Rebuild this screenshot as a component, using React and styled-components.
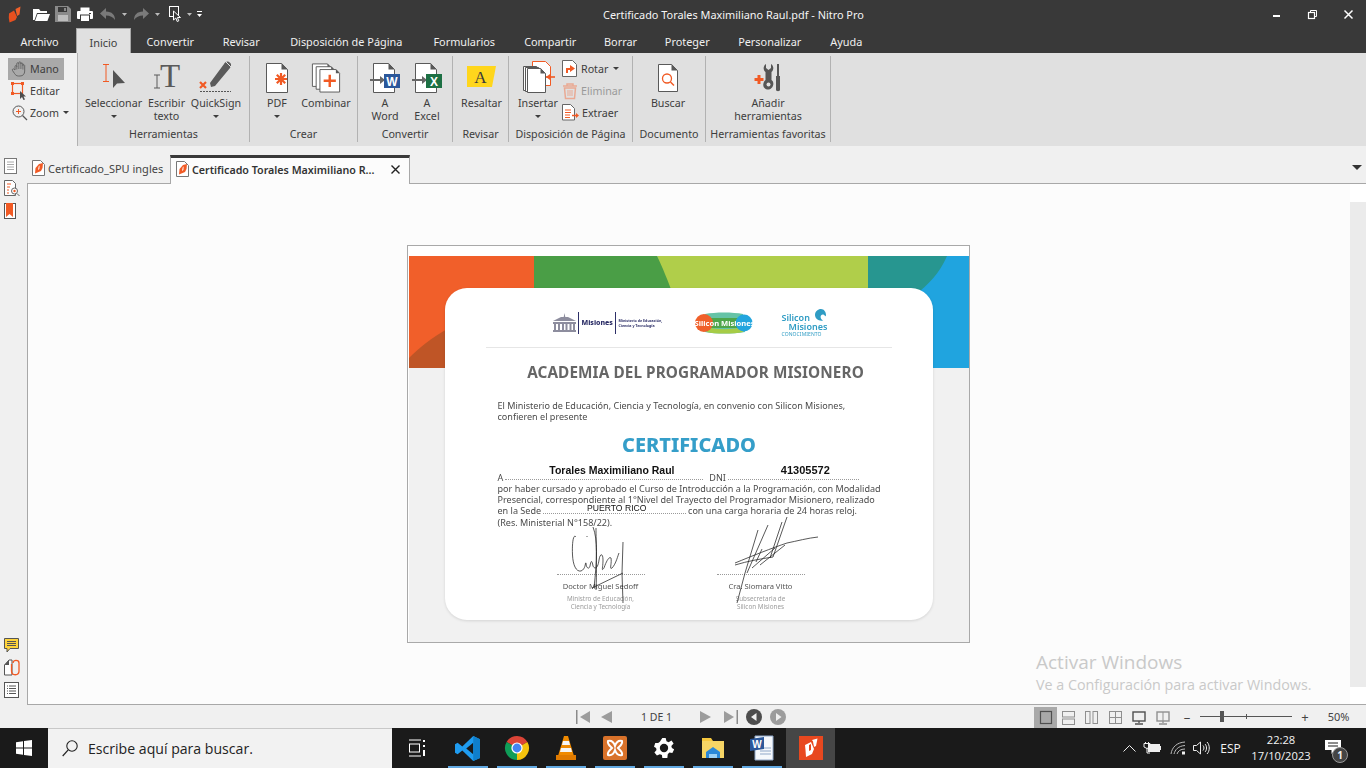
import React from "react";
import styled, { createGlobalStyle } from "styled-components";

const Global = createGlobalStyle`
  html, body { margin: 0; padding: 0; overflow: hidden; background: #f0f0f0; }
  * { box-sizing: border-box; }
  #root { width: 1366px; height: 768px; }
`;

const UI = `"Noto Sans", "Open Sans", sans-serif`;
const DOCFONT = `"Noto Sans", "Open Sans", sans-serif`;
const OR = "#f15a24";
const GR = "#595959";

const Shell = styled.div`
  width: 1366px; height: 768px; display: flex; flex-direction: column;
  font-family: ${UI}; font-size: 10.7px; color: #3d3d3d; overflow: hidden; background: #f0f0f0;
`;

/* ---------- title bar ---------- */
const TitleBar = styled.div`
  height: 28px; background: #393939; color: #fff; display: grid;
  grid-template-columns: 603px 1fr auto; align-items: center;
`;
const Quick = styled.div`display: flex; align-items: center; padding-left: 8px; height: 28px;`;
const QuickSlot = styled.span`display: flex; margin-left: ${p => p.$ml || 0}px;`;
const WinTitle = styled.div`font-size: 10.9px; white-space: nowrap; color: #f5f5f5;`;
const WinBtns = styled.div`display: flex; align-items: center; height: 28px;`;
const WinBtn = styled.span`width: 36px; display: flex; justify-content: center; align-items: center; padding-top: ${p => p.$pt || 0}px;`;

/* ---------- menu ---------- */
const Menu = styled.div`height: 25px; background: #393939; display: flex; align-items: flex-end; padding-left: 3px; font-size: 10.9px;`;
const MenuTab = styled.div`
  height: 25px; padding: 2px 0 0; display: flex; align-items: center; justify-content: center; flex: none; white-space: nowrap;
  width: ${p => p.$w}px;
  color: ${p => (p.$active ? "#3d3d3d" : "#f0f0f0")};
  background: ${p => (p.$active ? "#e0e0e0" : "transparent")};
  ${p => p.$active && "border: 1px solid #a8a8a8; border-bottom: 0; margin-right: 1px;"}
`;

/* ---------- ribbon ---------- */
const Ribbon = styled.div`height: 93px; display: flex; background: #e0e0e0;`;
const HandCol = styled.div`width: 77px; background: #f0f0f0; padding: 5px 0 0 8px; flex: none;`;
const HandRow = styled.div`
  width: 56px; height: 22px; display: flex; align-items: center; gap: 1px; padding: 0 0 1px 3px;
  background: ${p => (p.$on ? "#a9a9a9" : "transparent")};
`;
const Groups = styled.div`display: flex; padding: 3px 0 4px; height: 93px; border-left: 1px solid #b2b2b2;`;
const Group = styled.div`
  width: ${p => p.$w}px; height: 86px; display: flex; flex-direction: column;
  border-right: 1px solid #b2b2b2; flex: none;
`;
const GroupBody = styled.div`height: 71px; padding-top: 2px; padding-left: ${p => p.$pl || 0}px; display: flex;`;
const GroupLabel = styled.div`height: 15px; line-height: 14px; text-align: center; white-space: nowrap;`;
const BigBtn = styled.div`width: ${p => p.$w}px; display: flex; flex-direction: column; align-items: center; flex: none; margin-right: ${p => p.$mr || 0}px;`;
const IconSlot = styled.div`height: 39px; padding-bottom: 1px; width: 100%; display: flex; align-items: center; justify-content: center;`;
const BtnLabel = styled.div`line-height: 13px; text-align: center; white-space: nowrap;`;
const Caret = styled.span`
  display: inline-block; width: 0; height: 0; border-left: 3px solid transparent; border-right: 3px solid transparent;
  border-top: 3px solid #3d3d3d; margin: ${p => p.$m || "5px 0 0"};
`;
const SmallList = styled.div`display: flex; flex-direction: column;`;
const SmallRow = styled.div`
  height: 22px; display: flex; align-items: center; gap: 3px; padding-bottom: 1px;
  color: ${p => (p.$off ? "#9a9a9a" : "#3d3d3d")};
`;

/* ---------- workspace ---------- */
const Work = styled.div`flex: 1; min-height: 0; display: flex;`;
const Side = styled.div`width: 27px; flex: none; display: flex; flex-direction: column; justify-content: space-between; padding: 12px 0 7px 4px;`;
const SideSet = styled.div`display: flex; flex-direction: column; gap: ${p => p.$gap}px;`;
const WorkRight = styled.div`flex: 1; min-width: 0; display: flex; flex-direction: column;`;
const Tabs = styled.div`height: 37px; display: flex; align-items: flex-end; position: relative; flex: none; z-index: 2; font-size: 11px;`;
const DocTab = styled.div`
  height: ${p => (p.$active ? "29px" : "28px")};
  width: ${p => p.$w}px; display: flex; align-items: center; padding-left: 5px; gap: 2px; white-space: nowrap;
  ${p => p.$active
    ? "background:#fcfcfc;border-top:3px solid #393939;border-left:1px solid #a8a8a8;border-right:1px solid #a8a8a8;font-weight:600;font-size:10.7px;color:#333;margin-bottom:-1px;padding-bottom:3px;"
    : "color:#444;padding-bottom:2px;"}
`;
const TabTitle = styled.span`flex: 1;`;
const TabClose = styled.span`display: flex; margin-right: 9px;`;
const TabMenu = styled.span`
  position: absolute; right: 4px; top: 19px; width: 0; height: 0;
  border-left: 5px solid transparent; border-right: 5px solid transparent; border-top: 5px solid #333;
`;
const DocArea = styled.div`
  flex: 1; min-height: 0; display: flex; background: #fcfcfc;
  border-top: 1px solid #a8a8a8; border-left: 1px solid #a8a8a8; border-bottom: 1px solid #a8a8a8; position: relative;
`;
const Canvas = styled.div`flex: 1; display: flex; align-items: center; justify-content: center; padding-right: 2px;`;
const Scroll = styled.div`width: 16px; background: #fff; padding: 18px 0 17px; flex: none;`;
const ScrollThumb = styled.div`height: 100%; background: #ebebeb;`;
const Watermark = styled.div`position: absolute; left: 1008px; top: 465px; color: #c9c9c9; pointer-events: none; white-space: nowrap; font-family: "Open Sans", sans-serif;`;
const WaterBig = styled.div`font-size: 19px; line-height: 26px;`;
const WaterSmall = styled.div`font-size: 14.3px; line-height: 20px;`;

/* ---------- the certificate page ---------- */
const Page = styled.div`
  width: 563px; height: 398px; border: 1px solid #a9a9a9; background: #fff; position: relative; flex: none;
`;
const PageTop = styled.div`padding: 10px 0 0 1px; height: 122px;`;
const PageRest = styled.div`height: 274px; background: #f1f1f1; margin-left: 1px;`;
const Card = styled.div`
  position: absolute; left: 37px; top: 42px; width: 488px; height: 332px; background: #fff; border-radius: 22px;
  box-shadow: 0 1px 3px rgba(0,0,0,.12); font-family: ${DOCFONT}; color: #4a4a4a; filter: blur(.25px);
  display: flex; flex-direction: column;
`;
const Logos = styled.div`height: 60px; margin: 0 41px; border-bottom: 1px solid #e6e6e6; display: flex; align-items: center; padding: 10px 0 0 67px;`;
const MisName = styled.span`font-size: 7px; font-weight: 800; color: #2d2f68; padding: 0 3px; border-left: 1px solid #2d2f68; border-right: 1px solid #2d2f68; margin-left: 2px; height: 22px; display: flex; align-items: center; width: 38px;`;
const MisMinistry = styled.span`font-size: 3.6px; line-height: 5px; font-weight: 700; color: #2d2f68; padding-left: 3px; width: 62px;`;
const SiliconBadge = styled.div`position: relative; width: 58px; height: 22px; margin-left: 17px; flex: none;`;
const SiliconBadgeText = styled.span`position: absolute; left: 0; top: 6px; width: 58px; text-align: center; color: #fff; font-size: 7.6px; line-height: 10px; font-weight: 700; white-space: nowrap;`;
const SiliconK = styled.div`margin-left: 29px; width: 46px; color: #2f9cc4; font-weight: 600; position: relative; flex: none; padding-top: 5px;`;
const SiliconKLine = styled.div`font-size: 9px; line-height: 9px; white-space: pre;`;
const SiliconKSub = styled.div`font-size: 5px; line-height: 6px; font-weight: 400; letter-spacing: .1px; white-space: nowrap;`;
const Swirl = styled.svg`position: absolute; right: 2px; top: 1px;`;
const CardTitle = styled.h1`margin: 14px 0 0; font-size: 15.3px; line-height: 20px; font-weight: 700; color: #666; text-align: center; padding-left: 14px; letter-spacing: .1px;`;
const Body = styled.div`padding-left: 53px; width: 460px; font-size: 9.05px; line-height: 11.3px; color: #4a4a4a;`;
const Intro = styled.p`margin: 18px 0 0;`;
const Cert = styled.div`margin: 10px 0 0 -3px; height: 24px; font-size: 20px; line-height: 24px; font-weight: 800; color: #359ec9; text-align: center; padding-right: 71px; width: 460px;`;
const FormLine = styled.div`display: flex; align-items: flex-end; margin-top: 15px; height: 11.3px; gap: 2px; white-space: nowrap;`;
const FormLineB = styled(FormLine)`margin-top: 0;`;
const Leader = styled.span`
  width: ${p => p.$w}px; height: 8px; border-bottom: 1px dotted #9a9a9a; position: relative; flex: none; margin: 0 ${p => p.$mr || 0}px 2.5px 0;
`;
const Filled = styled.span`
  position: absolute; left: ${p => p.$l}px; bottom: ${p => p.$b}px; color: #111; white-space: nowrap;
  font-family: "Liberation Sans", sans-serif; font-weight: ${p => (p.$bold ? 700 : 400)}; font-size: ${p => p.$s}px;
`;
const Signs = styled.div`display: flex; padding-left: 112px; position: relative; margin-top: 46px;`;
const Sign = styled.div`width: 88px; margin-right: ${p => p.$mr || 0}px; border-top: 1px dotted #9a9a9a; text-align: center; padding-top: 6px; flex: none;`;
const SignName = styled.div`font-size: 7.6px; line-height: 11px; color: #555; white-space: nowrap;`;
const SignRole = styled.div`font-size: 6.3px; line-height: 8px; color: #9c9c9c; white-space: nowrap; margin-top: 3px;`;
const SigInk = styled.svg`position: absolute; left: 95px; top: -62px;`;

/* ---------- status bar ---------- */
const Status = styled.div`height: 23px; flex: none; display: grid; grid-template-columns: 1034px 1fr; background: #f0f0f0;`;
const Pager = styled.div`display: flex; align-items: center; padding-left: 576px;`;
const PagerGap = styled.span`width: ${p => p.$w}px; flex: none;`;
const PageNum = styled.span`width: 86px; padding-left: 28px; font-size: 10.5px; color: #444; flex: none;`;
const ViewSet = styled.div`display: flex; align-items: center;`;
const ViewBtn = styled.span`
  width: ${p => p.$w || 24}px; height: 21px; margin-top: 2px; display: flex; align-items: center; justify-content: center; flex: none;
  background: ${p => (p.$on ? "#a9a9a9" : "transparent")};
`;
const ZoomBit = styled.span`color: #444; font-size: ${p => p.$s || 13}px; width: ${p => p.$w}px; text-align: center; flex: none; line-height: 16px;`;
const Slider = styled.div`width: 92px; height: 1px; background: #555; position: relative; margin: 0 7px 0 1px; flex: none;`;
const Thumb = styled.span`position: absolute; left: 20px; top: -5px; width: 4px; height: 11px; background: #555;`;
const Tick = styled.span`position: absolute; left: 46px; top: -2px; width: 1px; height: 5px; background: #555;`;

/* ---------- task bar ---------- */
const Task = styled.div`height: 40px; flex: none; background: #1a1a1a; display: flex; color: #fff;`;
const Start = styled.div`width: 48px; display: flex; align-items: center; justify-content: center; flex: none;`;
const SearchBox = styled.div`
  width: 344px; background: #f2f2f2; color: #222; display: flex; align-items: center; padding-left: 14px; gap: 10px;
  font-family: "Open Sans", sans-serif; font-size: 14.1px; flex: none; border-top: 1px solid #c8c8c8;
`;
const TaskView = styled.div`width: 51px; display: flex; align-items: center; justify-content: center; flex: none; padding-right: 2px;`;
const Pin = styled.div`
  width: 49px; height: 40px; display: flex; align-items: center; justify-content: center; position: relative; flex: none;
  background: ${p => (p.$on ? "#464646" : "transparent")};
  &::after { content: ""; position: absolute; left: ${p => (p.$on ? 0 : 5)}px; right: ${p => (p.$on ? 0 : 4)}px; bottom: 0; height: 2px; background: ${p => (p.$on ? "#464646" : "#62a9e2")}; }
`;
const Tray = styled.div`flex: 1; display: flex; align-items: center; padding-left: 288px; font-family: "Open Sans", sans-serif; font-size: 12px; color: #f3f3f3;`;
const TraySlot = styled.span`display: flex; width: ${p => p.$w}px; justify-content: center; flex: none;`;
const Clock = styled.div`width: 68px; text-align: center; line-height: 16px; flex: none; white-space: nowrap; font-size: 11.2px;`;
const Notify = styled.div`margin-left: 10px; position: relative; width: 24px; height: 24px; flex: none; padding-top: 4px;`;
const NotifyNum = styled.span`position: absolute; right: 1px; bottom: -3px; width: 16px; height: 16px; border-radius: 50%; background: #444; border: 1px solid #999; font-size: 10px; line-height: 14px; text-align: center; font-weight: 700;`;

/* ---------- icons ---------- */
const Sv = ({ w, h, children, vb }) => <svg width={w} height={h} viewBox={vb || `0 0 ${w} ${h}`} style={{ display: "block", flex: "none", overflow: "visible" }}>{children}</svg>;

const docPath = (x, y, w, h, f = 6) => `M${x} ${y}H${x + w - f}L${x + w} ${y + f}V${y + h}H${x}Z`;
const Doc = ({ x, y, w, h, f = 6, s = GR }) => (
  <g>
    <path d={docPath(x + .5, y + .5, w, h, f)} fill="#fff" stroke={s} />
    <path d={`M${x + w - f + .5} ${y}L${x + w + .5} ${y + f + .5}H${x + w - f + .5}Z`} fill={s} />
  </g>
);
const LogoIcon = () => (
  <Sv w={14} h={17} vb="0 0 14 17">
    <path d="M7.5 3L12.5.5L11.5 8.5L9 10Z" fill="#f0602a" />
    <path d="M1 7.5L6 4.5L9 11L7.5 14L1.5 16.5L.8 12Z" fill="#e8501f" />
  </Sv>
);
const FileTab = () => (
  <Sv w={14} h={17}>
    <path d={docPath(.5, .5, 12, 15, 4)} fill="#fff" stroke="#777" />
    <path d="M7 4L11 3L10.5 8L9 11L3 13.5L3.5 8Z" fill={OR} />
    <path d="M6.8 6L7.6 5.5L7.4 9L6 10Z" fill="#fff" />
  </Sv>
);
const OpenIcon = () => (
  <Sv w={17} h={14}><path d="M0 2h6l1.5 2H14v2H4L1.5 13H0ZM4.5 7H17l-2.6 7H2Z" fill="#fff" /></Sv>
);
const SaveIcon = () => (
  <Sv w={16} h={16}><path d="M0 0H13L16 3V16H0Z" fill="#8a8a8a" /><rect x="3" y="1" width="9" height="5" fill="#393939" /><rect x="3" y="9" width="10" height="6" fill="#bdbdbd" /><rect x="9" y="2" width="2" height="3" fill="#8a8a8a" /></Sv>
);
const PrintIcon = () => (
  <Sv w={16} h={15}><rect x="3.5" y=".5" width="9" height="5" fill="#fff" /><rect x="0" y="4" width="16" height="8" rx="1" fill="#fff" /><rect x="3.5" y="8" width="9" height="6.5" fill="#fff" stroke="#393939" /><rect x="12" y="6" width="2" height="1" fill="#393939" /></Sv>
);
const UndoIcon = ({ flip }) => (
  <Sv w={16} h={12}><path d={flip ? "M10 0L16 5.5L10 11V7.5C6 7.5 3 9 1 12C1 7 4 3.5 10 3.5Z" : "M6 0L0 5.5L6 11V7.5C10 7.5 13 9 15 12C15 7 12 3.5 6 3.5Z"} fill="#7a7a7a" /></Sv>
);
const SelectQuick = () => (
  <Sv w={13} h={16}><rect x=".5" y=".5" width="9" height="10" fill="none" stroke="#fff" /><path d="M4.5 5V14L6.8 12L8.2 15.5L9.8 14.8L8.4 11.5H11.5Z" fill="#393939" stroke="#fff" /></Sv>
);
const MoreIcon = () => (
  <Sv w={6} h={6}><rect y="0" width="5" height="1" fill="#fff" /><path d="M0 3H5L2.5 6Z" fill="#fff" /></Sv>
);
const QCaret = () => <Sv w={5} h={3}><path d="M0 0H5L2.5 3Z" fill="#bbb" /></Sv>;

const HandIcon = () => (
  <Sv w={18} h={18}>
    <path d="M4 10V6.5C4 5.2 5.7 5.2 5.8 6.5V3.7C5.8 2.4 7.7 2.4 7.8 3.7V2.8C7.8 1.5 9.8 1.5 9.9 2.8V3.8C10 2.7 11.8 2.7 11.9 3.9V5.5C12 4.4 13.7 4.5 13.7 5.8V11C13.7 14 12 16 9 16H7.5C5.5 16 4.5 15 3.5 13.5L1.5 10.5C.8 9.3 2.3 8.3 3.2 9.3Z" fill="#a9a9a9" stroke="#5e5e5e" strokeWidth=".9" />
    <path d="M5.8 6V9.5M7.8 3.7V9M9.9 3V9M11.9 4V9.5" stroke="#5e5e5e" strokeWidth=".8" />
  </Sv>
);
const EditIcon = () => (
  <Sv w={18} h={18}>
    <rect x="1.5" y="1.5" width="10" height="10" fill="none" stroke={OR} strokeWidth="1.2" />
    <g fill={OR}><rect x="0" y="0" width="3" height="3" /><rect x="10" y="0" width="3" height="3" /><rect x="0" y="10" width="3" height="3" /></g>
    <path d="M9 9V17L11 15L12.5 18L14 17.5L12.5 14.5H15Z" fill="#4d4d4d" />
  </Sv>
);
const ZoomIcon = () => (
  <Sv w={18} h={16} vb="-1 0 18 16">
    <circle cx="6.5" cy="6.5" r="5.5" fill="none" stroke="#555" />
    <path d="M10.5 10.5L15 15" stroke="#555" strokeWidth="1.3" />
    <path d="M4 6.5H9M6.5 4V9" stroke={OR} />
  </Sv>
);
const SelectIcon = () => (
  <Sv w={26} h={28}>
    <path d="M2 1.5H8M5 1.5V18.5M2 18.5H8" stroke={OR} fill="none" strokeWidth="1" />
    <path d="M12 7V25L16 20.5L24 20L12 7Z" fill="#545454" />
  </Sv>
);
const TypeIcon = () => (
  <Sv w={28} h={28}>
    <text x="7" y="24" fontFamily="Liberation Serif, serif" fontSize="33" fill="#5a5a5a">T</text>
    <path d="M1 12H7M4 12V25M1 25H7" stroke="#5a5a5a" fill="none" />
  </Sv>
);
const SignIcon = () => (
  <Sv w={34} h={32}>
    <path d="M11 22L12 26L16 25L31 7C33 4 32 2 30 1C28 0 26 1 25 3Z" fill="#5a5a5a" />
    <path d="M27 1L33 7" stroke="#e0e0e0" />
    <path d="M1 21L7 27M7 21L1 27" stroke={OR} strokeWidth="2.2" />
    <path d="M1 30.5H32" stroke="#555" strokeDasharray="2 1" />
  </Sv>
);
const PdfIcon = () => (
  <Sv w={24} h={31}>
    <Doc x={1} y={1} w={21} h={29} f={6} />
    <path d="M16 11V23M10 17H22M11.8 12.8L20.2 21.2M20.2 12.8L11.8 21.2" stroke={OR} strokeWidth="2.2" />
  </Sv>
);
const CombineIcon = () => (
  <Sv w={30} h={31} vb="0 0 32 32">
    <Doc x={1} y={1} w={20} h={24} f={4} />
    <Doc x={5} y={4} w={20} h={24} f={4} />
    <Doc x={9} y={7} w={21} h={24} f={4} />
    <path d="M20 13V26M13.5 19.5H26.5" stroke={OR} strokeWidth="2.6" />
  </Sv>
);
const ConvertIcon = ({ color, letter }) => (
  <Sv w={32} h={31}>
    <Doc x={4} y={1} w={21} h={29} f={6} />
    <path d="M1 18H13" stroke="#666" strokeWidth="2" />
    <path d="M11 14L16 18L11 22Z" fill="#666" />
    <rect x="15" y="12" width="16" height="14" fill={color} />
    <text x="23" y="23.5" textAnchor="middle" fontFamily="Liberation Sans, sans-serif" fontWeight="700" fontSize="12" fill="#fff">{letter}</text>
  </Sv>
);
const HighlightIcon = () => (
  <Sv w={29} h={22}>
    <path d="M0 0H29L25 21H0Z" fill="#ffd61c" />
    <text x="13.5" y="17" textAnchor="middle" fontFamily="Liberation Serif, serif" fontSize="17" fill="#3a3a3a">A</text>
  </Sv>
);
const InsertIcon = () => (
  <Sv w={33} h={32}>
    <path d={docPath(10.5, .5, 18, 24, 5)} fill="#fff" stroke={OR} />
    <Doc x={1} y={5} w={17} h={24} f={4} />
    <Doc x={3} y={6} w={17} h={24} f={4} />
    <Doc x={5} y={7} w={18} h={24} f={5} />
    <path d="M24 16H33" stroke={OR} strokeWidth="1.6" />
    <path d="M28 13L24 16L28 19Z" fill={OR} />
  </Sv>
);
const RotateIcon = () => (
  <Sv w={16} h={17}>
    <path d={docPath(.5, .5, 14, 16, 4)} fill="#fff" stroke="#666" />
    <path d="M4 13V8H8V5L13 8.5L8 12V10H6V13Z" fill={OR} />
  </Sv>
);
const TrashIcon = () => (
  <Sv w={16} h={16}>
    <path d="M1 3H15M5 3V1H11V3" stroke="#e9a993" strokeWidth="1.5" fill="none" />
    <path d="M2.5 5H13.5L12.5 15.5H3.5Z" fill="none" stroke="#e9a993" strokeWidth="1.5" />
    <path d="M6 7V13M8 7V13M10 7V13" stroke="#e9a993" />
  </Sv>
);
const ExtractIcon = () => (
  <Sv w={17} h={17}>
    <path d={docPath(.5, .5, 12, 15.5, 4)} fill="#fff" stroke="#666" />
    <path d="M3 6H9M3 8.5H9M3 11H8M3 13.5H8" stroke={OR} />
    <path d="M10 11.5H15" stroke={OR} strokeWidth="1.5" />
    <path d="M14 9L17 11.5L14 14Z" fill={OR} />
  </Sv>
);
const SearchDoc = () => (
  <Sv w={22} h={29}>
    <Doc x={1} y={1} w={19} h={27} f={6} />
    <circle cx="10" cy="15.5" r="4.5" fill="none" stroke={OR} strokeWidth="1.3" />
    <path d="M13.5 19L17 22.5" stroke={OR} strokeWidth="1.5" />
  </Sv>
);
const ToolsIcon = () => (
  <Sv w={28} h={29}>
    <path d="M5 12V21M.5 16.5H9.5" stroke={OR} strokeWidth="3" />
    <path d="M12 1V5L14.5 7L17 5V1C20 3 20 7 17.5 9V17C20 18.5 20 23 17.5 25C15.5 27 12.5 27 10.5 25C8.5 23 9 19 11.5 17V9C9 7 9 3 12 1Z" fill="#555" />
    <circle cx="14.5" cy="21.5" r="2" fill="#e0e0e0" />
    <path d="M23 1H25V13H23Z" fill="#555" />
    <path d="M22 13H26V27C26 28.5 22 28.5 22 27Z" fill="#555" />
  </Sv>
);
const SidePage = () => (
  <Sv w={14} h={16}><rect x=".5" y=".5" width="12" height="15" fill="#fff" stroke="#777" /><path d="M3 4H10M3 6.5H10M3 9H10M3 11.5H10" stroke="#aaa" /></Sv>
);
const SideReport = () => (
  <Sv w={16} h={17}>
    <path d={docPath(.5, .5, 11, 15, 3)} fill="#fff" stroke="#666" />
    <path d="M3 4H7M3 7H6M3 10H5M3 13H5" stroke={OR} />
    <circle cx="10.5" cy="11" r="3" fill="#fff" stroke="#666" />
    <circle cx="10.5" cy="11" r="1.2" fill={OR} />
    <path d="M13 13.5L15.5 16" stroke="#666" />
  </Sv>
);
const SideMark = () => (
  <Sv w={14} h={16}><rect x=".5" y=".5" width="11" height="15" fill="#fff" stroke="#555" /><path d="M2 0H9V14L5.5 11L2 14Z" fill={OR} /></Sv>
);
const SideNote = () => (
  <Sv w={15} h={15}>
    <path d="M.5 .5H14.5V10.5H6L3 14V10.5H.5Z" fill="#ffd43b" stroke="#555" />
    <path d="M3 3.5H12M3 5.5H12M3 7.5H12" stroke="#555" />
  </Sv>
);
const SideClip = () => (
  <Sv w={16} h={17}>
    <path d="M.5 6L5 1H8V16H.5Z" fill="#fff" stroke="#555" />
    <path d="M.5 6H5V1Z" fill="#555" />
    <path d="M9 4C9 .5 15 .5 15 4V12C15 17 7.5 17 7.5 12V5" fill="none" stroke={OR} strokeWidth="1.3" />
  </Sv>
);
const SideList = () => (
  <Sv w={15} h={16}>
    <rect x=".5" y=".5" width="14" height="15" fill="#fff" stroke="#555" />
    <path d="M5 4H12M5 6.5H12M5 9H12M5 11.5H12M3 4H4M3 6.5H4M3 9H4M3 11.5H4" stroke="#555" />
  </Sv>
);

const PagerFirst = ({ flip }) => (
  <Sv w={16} h={16}>
    <g transform={flip ? "translate(16,0) scale(-1,1)" : ""}>
      <rect x="0" y="1" width="1.5" height="14" fill="#8a8a8a" />
      <path d="M14 2V14L4 8Z" fill="#9c9c9c" />
    </g>
  </Sv>
);
const PagerPrev = ({ flip }) => (
  <Sv w={12} h={14}>
    <path d={flip ? "M1 1V13L12 7Z" : "M11 1V13L0 7Z"} fill="#9c9c9c" />
  </Sv>
);
const PagerRound = ({ color, flip }) => (
  <Sv w={16} h={16}>
    <circle cx="8" cy="8" r="8" fill={color} />
    <path d={flip ? "M6 4V12L11.5 8Z" : "M10.5 4V12L5 8Z"} fill="#f0f0f0" />
  </Sv>
);

const VG = "#8f8f8f";
const V1 = () => <Sv w={12} h={13}><rect x=".5" y=".5" width="11" height="12" fill="none" stroke="#4f4f4f" strokeWidth="1.2" /></Sv>;
const V2 = () => <Sv w={13} h={14}><rect x=".5" y=".5" width="12" height="5.5" fill="none" stroke={VG} /><rect x=".5" y="8" width="12" height="5.5" fill="none" stroke={VG} /></Sv>;
const V3 = () => <Sv w={13} h={13}><rect x=".5" y=".5" width="4.5" height="12" fill="none" stroke={VG} /><rect x="8" y=".5" width="4.5" height="12" fill="none" stroke={VG} /></Sv>;
const V4 = () => <Sv w={13} h={13}><rect x=".5" y=".5" width="12" height="12" fill="none" stroke={VG} /><path d="M6.5 0V13M0 6.5H13" stroke={VG} /></Sv>;
const V5 = ({ c = "#4f4f4f", split }) => (
  <Sv w={14} h={14}>
    <rect x="1" y="1" width="12" height="9" fill="none" stroke={c} strokeWidth="1.4" />
    {split && <path d="M7 1V10" stroke={c} />}
    <path d="M7 10V12M3 13H11" stroke={c} strokeWidth="1.3" />
  </Sv>
);

const WinLogo = () => (
  <Sv w={16} h={16}><path d="M0 2.2L7 1.2V7.5H0ZM8 1L16 0V7.5H8ZM0 8.5H7V14.8L0 13.8ZM8 8.5H16V16L8 15Z" fill="#fff" /></Sv>
);
const SearchGlass = () => (
  <Sv w={16} h={17}><circle cx="10" cy="6" r="5.2" fill="none" stroke="#222" strokeWidth="1.1" /><path d="M6.2 9.8L.7 16" stroke="#222" strokeWidth="1.2" /></Sv>
);
const TaskViewIcon = () => (
  <Sv w={16} h={18}>
    <path d="M0 1H12M0 17H12" stroke="#fff" />
    <rect x=".5" y="5" width="10" height="8" fill="none" stroke="#fff" />
    <path d="M14 1H16V3H14ZM14 6H16V8H14ZM14 11H16V17H14Z" fill="#fff" />
  </Sv>
);
const VsCode = () => (
  <Sv w={25} h={25} vb="0 0 24 24">
    <path d="M17.5 0L24 3V21L17.5 24L7 14L2.5 17.5L0 16V8L2.5 6.5L7 10ZM17.5 6.5L10.8 12L17.5 17.5Z" fill="#1f9cf0" />
    <path d="M17.5 0L24 3V21L17.5 24Z" fill="#0f7fcc" />
  </Sv>
);
const ChromeIcon = () => (
  <Sv w={24} h={24}>
    <path d="M12 12L1.6 6A12 12 0 0 1 22.4 6Z" fill="#db4437" />
    <path d="M12 12L22.4 6A12 12 0 0 1 12 24Z" fill="#f4c20d" />
    <path d="M12 12L12 24A12 12 0 0 1 1.6 6Z" fill="#0f9d58" />
    <circle cx="12" cy="12" r="5.6" fill="#fff" />
    <circle cx="12" cy="12" r="4.4" fill="#4285f4" />
  </Sv>
);
const VlcIcon = () => (
  <Sv w={20} h={24}>
    <path d="M8 0H12L18 20H2Z" fill="#f08a00" />
    <path d="M7 5H13L14 9H6ZM5 12H15L16 16H4Z" fill="#f5f5f5" />
    <path d="M0 19H20V24H0Z" fill="#e07a00" />
  </Sv>
);
const XamppIcon = () => (
  <Sv w={24} h={24}>
    <rect width="24" height="24" rx="2" fill="#d9722a" />
    <path d="M5 5C9 4 11 7 12 10C13 7 15 4 19 5C20 8 17 10 15 12C17 14 20 16 19 19C15 20 13 17 12 14C11 17 9 20 5 19C4 16 7 14 9 12C7 10 4 8 5 5Z" fill="none" stroke="#fff" strokeWidth="2" />
  </Sv>
);
const GearIcon = () => (
  <Sv w={20} h={20} vb="0 0 24 24">
    <path d="M10 0H14L15 4L17.5 5L21 3L23.5 6.5L20.8 9.5L21.5 12L24 13.5V14L22 18L18.5 17.5L16.5 19.5L16 24H10L9.5 20.5L7 19.5L3.5 21L.5 17.5L3 14.5L2.5 12L0 10.5L1.5 6L5 6L7 4.5Z" fill="#fff" />
    <circle cx="12" cy="12" r="5" fill="#1a1a1a" />
  </Sv>
);
const FolderIcon = () => (
  <Sv w={22} h={20}>
    <path d="M0 0H9L11 3H22V6H0Z" fill="#f6c83e" />
    <path d="M0 3H22V20H0Z" fill="#f6d565" />
    <path d="M4 20V14L11 9L18 14V20Z" fill="#2b88d8" />
    <rect x="7" y="16" width="8" height="4" fill="#9dd1f5" />
  </Sv>
);
const WordIcon = () => (
  <Sv w={24} h={24}>
    <path d="M5 0H23V24H5Z" fill="#f5f8fc" stroke="#8fa7c8" />
    <path d="M10 12H21M10 15H21M10 18H21" stroke="#8fa7c8" />
    <path d="M0 3L14 1V13L0 15Z" fill="#2b579a" />
    <text x="7" y="12" textAnchor="middle" fontFamily="Liberation Sans, sans-serif" fontWeight="700" fontSize="10" fill="#fff">W</text>
  </Sv>
);
const NitroTask = () => (
  <Sv w={24} h={24}>
    <rect width="24" height="24" fill="#e8481f" />
    <path d="M13 4L18.5 2.5L17 10L15 11L14 5.5ZM6 9L12 6L15 13L13 18L7 21L6.5 14Z" fill="#fff" />
    <path d="M10 9L12 8L12 14L10 15Z" fill="#e8481f" />
  </Sv>
);
const Chev = () => <Sv w={13} h={7}><path d="M.5 6.5L6.5 .5L12.5 6.5" fill="none" stroke="#eee" /></Sv>;
const Battery = () => (
  <Sv w={17} h={12}><rect x="4.5" y="2.5" width="11" height="7" fill="#eee" stroke="#eee" /><rect x="15.5" y="4" width="1.5" height="4" fill="#eee" /><path d="M0 1.5H6V5L3 6.5L0 5ZM3 6V11H6" fill="none" stroke="#eee" /><rect x="1" y="0" width="1" height="2" fill="#eee" /><rect x="4" y="0" width="1" height="2" fill="#eee" /></Sv>
);
const Wifi = () => (
  <Sv w={15} h={14}><path d="M0 13C1 6 6 1.5 14 1M3 13C4 9 7 5 14 4.5M6 13C7 10 9.5 8 14 8" fill="none" stroke="#bbb" /><rect x="11" y="10.5" width="3" height="3" fill="#eee" /></Sv>
);
const Volume = () => (
  <Sv w={17} h={14}><path d="M.5 4.5H3.5L7.5 1V13L3.5 9.5H.5Z" fill="none" stroke="#eee" /><path d="M10 4.5C11.3 6 11.3 8 10 9.5M12 3C14 5 14 9 12 11M14 1C17 4 17 10 14 13" fill="none" stroke="#eee" /></Sv>
);
const Bubble = () => (
  <Sv w={16} h={15}><path d="M0 0H16V10H10L6.5 14V10H0Z" fill="#fff" /><path d="M3 3H13M3 6H13" stroke="#1a1a1a" /></Sv>
);
const X = ({ c = "#fff", s = 9, w = 1.5 }) => <Sv w={s} h={s}><path d={`M.5 .5L${s - .5} ${s - .5}M${s - .5} .5L.5 ${s - .5}`} stroke={c} strokeWidth={w} /></Sv>;

const Banner = () => (
  <svg width="560" height="112" viewBox="0 0 560 112" style={{ display: "block" }}>
    <rect width="560" height="112" fill="#20a4df" />
    <path d="M0 0H125V112H0Z" fill="#f15f2a" />
    <path d="M0 102C10 92 22 82 40 72V112H0Z" fill="#bf5526" />
    <path d="M125 0H248C260 20 272 36 290 60L290 112H125Z" fill="#4a9e46" />
    <path d="M248 0H459V112H290C272 60 258 20 248 0Z" fill="#b0ce4a" />
    <path d="M459 0H538C530 18 520 28 505 40V112H459Z" fill="#279690" />
  </svg>
);
const Palace = () => (
  <Sv w={23} h={19}>
    <g fill="#8d8d9e">
      <path d="M11.5 0L12.3 4H15L23 8H0L8 4H10.7Z" />
      <rect y="9" width="23" height="2" />
      <rect y="17" width="23" height="2" />
      <path d="M1 11H3V17H1ZM5 11H7V17H5ZM9 11H11V17H9ZM12.5 11H14.5V17H12.5ZM16.5 11H18.5V17H16.5ZM20 11H22V17H20Z" />
    </g>
  </Sv>
);
const BadgeShape = () => (
  <svg width="58" height="22" viewBox="0 0 58 22" style={{ position: "absolute", left: 0, top: 0 }}>
    <path d="M10 2C20 0 38 0 48 2L50 20C38 22 20 22 10 20Z" fill="#65c3a6" />
    <path d="M10 6H48V16H10Z" fill="#4ea54a" />
    <path d="M12 15C22 18 36 18 48 15L48 20C38 22 20 22 12 20Z" fill="#a6cc46" />
    <circle cx="9" cy="11" r="9" fill="#f0602a" />
    <circle cx="49" cy="11" r="8.5" fill="#22a5de" />
  </svg>
);

const menuItems = [
  ["Convertir", 76.5], ["Revisar", 65.5], ["Disposición de Página", 144.5], ["Formularios", 91.5], ["Compartir", 80.5],
  ["Borrar", 60], ["Proteger", 73.5], ["Personalizar", 91.5], ["Ayuda", 61.5],
];

const Big = ({ w, mr, icon, children, caret }) => (
  <BigBtn $w={w} $mr={mr}>
    <IconSlot>{icon}</IconSlot>
    {children}
    {caret && <Caret />}
  </BigBtn>
);

export default function App() {
  return (
    <Shell>
      <Global />
      <TitleBar>
        <Quick>
          <LogoIcon />
          <QuickSlot $ml={11}><OpenIcon /></QuickSlot>
          <QuickSlot $ml={5}><SaveIcon /></QuickSlot>
          <QuickSlot $ml={6}><PrintIcon /></QuickSlot>
          <QuickSlot $ml={7}><UndoIcon /></QuickSlot>
          <QuickSlot $ml={6}><QCaret /></QuickSlot>
          <QuickSlot $ml={6}><UndoIcon flip /></QuickSlot>
          <QuickSlot $ml={6}><QCaret /></QuickSlot>
          <QuickSlot $ml={9}><SelectQuick /></QuickSlot>
          <QuickSlot $ml={5}><QCaret /></QuickSlot>
          <QuickSlot $ml={5}><MoreIcon /></QuickSlot>
        </Quick>
        <WinTitle>Certificado Torales Maximiliano Raul.pdf - Nitro Pro</WinTitle>
        <WinBtns>
          <WinBtn $pt={3}><Sv w={7} h={2}><rect width="7" height="2" fill="#fff" /></Sv></WinBtn>
          <WinBtn><Sv w={9} h={9}><path d="M2.5 2.5V.5H8.5V6.5H6.5" fill="none" stroke="#fff" /><rect x=".5" y="2.5" width="6" height="6" fill="none" stroke="#fff" strokeWidth="1.2" /></Sv></WinBtn>
          <WinBtn><X /></WinBtn>
        </WinBtns>
      </TitleBar>

      <Menu>
        <MenuTab $w={73}>Archivo</MenuTab>
        <MenuTab $active $w={55}>Inicio</MenuTab>
        {menuItems.map(([t, w]) => <MenuTab key={t} $w={w}>{t}</MenuTab>)}
      </Menu>

      <Ribbon>
        <HandCol>
          <HandRow $on><HandIcon />Mano</HandRow>
          <HandRow><EditIcon />Editar</HandRow>
          <HandRow><ZoomIcon />Zoom<Caret $m="0 0 0 3px" /></HandRow>
        </HandCol>
        <Groups>
          <Group $w={172}>
            <GroupBody $pl={5}>
              <Big w={61} icon={<SelectIcon />} caret><BtnLabel>Seleccionar</BtnLabel></Big>
              <Big w={45} icon={<TypeIcon />}><BtnLabel>Escribir<br />texto</BtnLabel></Big>
              <Big w={54} icon={<SignIcon />} caret><BtnLabel>QuickSign</BtnLabel></Big>
            </GroupBody>
            <GroupLabel>Herramientas</GroupLabel>
          </Group>
          <Group $w={108}>
            <GroupBody $pl={8}>
              <Big w={38} mr={5} icon={<PdfIcon />} caret><BtnLabel>PDF</BtnLabel></Big>
              <Big w={50} icon={<CombineIcon />}><BtnLabel>Combinar</BtnLabel></Big>
            </GroupBody>
            <GroupLabel>Crear</GroupLabel>
          </Group>
          <Group $w={95}>
            <GroupBody $pl={7}>
              <Big w={40} mr={2} icon={<ConvertIcon color="#2b579a" letter="W" />}><BtnLabel>A<br />Word</BtnLabel></Big>
              <Big w={40} icon={<ConvertIcon color="#1d7044" letter="X" />}><BtnLabel>A<br />Excel</BtnLabel></Big>
            </GroupBody>
            <GroupLabel>Convertir</GroupLabel>
          </Group>
          <Group $w={56}>
            <GroupBody $pl={1}><Big w={55} icon={<HighlightIcon />}><BtnLabel>Resaltar</BtnLabel></Big></GroupBody>
            <GroupLabel>Revisar</GroupLabel>
          </Group>
          <Group $w={124}>
            <GroupBody $pl={7}>
              <Big w={44} mr={2} icon={<InsertIcon />} caret><BtnLabel>Insertar</BtnLabel></Big>
              <SmallList>
                <SmallRow><RotateIcon />Rotar<Caret $m="0 0 0 2px" /></SmallRow>
                <SmallRow $off><TrashIcon />Eliminar</SmallRow>
                <SmallRow><ExtractIcon />Extraer</SmallRow>
              </SmallList>
            </GroupBody>
            <GroupLabel>Disposición de Página</GroupLabel>
          </Group>
          <Group $w={73}>
            <GroupBody><Big w={70} icon={<SearchDoc />}><BtnLabel>Buscar</BtnLabel></Big></GroupBody>
            <GroupLabel>Documento</GroupLabel>
          </Group>
          <Group $w={125}>
            <GroupBody><Big w={124} icon={<ToolsIcon />}><BtnLabel>Añadir<br />herramientas</BtnLabel></Big></GroupBody>
            <GroupLabel>Herramientas favoritas</GroupLabel>
          </Group>
        </Groups>
      </Ribbon>

      <Work>
        <Side>
          <SideSet $gap={6}><SidePage /><SideReport /><SideMark /></SideSet>
          <SideSet $gap={6}><SideNote /><SideClip /><SideList /></SideSet>
        </Side>
        <WorkRight>
          <Tabs>
            <DocTab $w={143}><FileTab /><TabTitle>Certificado_SPU ingles</TabTitle></DocTab>
            <DocTab $w={240} $active><FileTab /><TabTitle>Certificado Torales Maximiliano R...</TabTitle><TabClose><X c="#222" s={9} w={1.4} /></TabClose></DocTab>
            <TabMenu />
          </Tabs>
          <DocArea>
            <Canvas>
              <Page>
                <PageTop><Banner /></PageTop>
                <PageRest />
                <Card>
                  <Logos>
                    <Palace />
                    <MisName>Misiones</MisName>
                    <MisMinistry>Ministerio de Educación,<br />Ciencia y Tecnología</MisMinistry>
                    <SiliconBadge><BadgeShape /><SiliconBadgeText>Silicon Misiones</SiliconBadgeText></SiliconBadge>
                    <SiliconK>
                      <Swirl width="13" height="12" viewBox="0 0 13 12">
                        <path d="M8 0C11 0 13 3 13 6C13 7 12.5 7.5 12 7C11 5 9 5 8 6.5C7 8.5 8 10.5 10 11.5C6 12.5 2 9.5 2 6C2 2.5 5 0 8 0Z" fill="#2f9cc4" />
                      </Swirl>
                      <SiliconKLine>{"Silicon\n   Misiones"}</SiliconKLine>
                      <SiliconKSub>CONOCIMIENTO</SiliconKSub>
                    </SiliconK>
                  </Logos>
                  <CardTitle>ACADEMIA DEL PROGRAMADOR MISIONERO</CardTitle>
                  <Body>
                    <Intro>El Ministerio de Educación, Ciencia y Tecnología, en convenio con Silicon Misiones,<br />confieren el presente</Intro>
                    <Cert>CERTIFICADO</Cert>
                    <FormLine>
                      A<Leader $w={198} $mr={4}><Filled $l={44} $b={3.5} $bold $s={10.5}>Torales Maximiliano Raul</Filled></Leader>
                      DNI<Leader $w={131}><Filled $l={53} $b={3.5} $bold $s={11}>41305572</Filled></Leader>
                    </FormLine>
                    <FormLineB>por haber cursado y aprobado el Curso de Introducción a la Programación, con Modalidad</FormLineB>
                    <FormLineB>Presencial, correspondiente al 1°Nivel del Trayecto del Programador Misionero, realizado</FormLineB>
                    <FormLineB>
                      en la Sede<Leader $w={143}><Filled $l={44} $b={-1.5} $s={8.6}>PUERTO RICO</Filled></Leader>con una carga horaria de 24 horas reloj.
                    </FormLineB>
                    <FormLineB>(Res. Ministerial N°158/22).</FormLineB>
                  </Body>
                  <Signs>
                    <Sign $mr={72}>
                      <SignName>Doctor Miguel Sedoff</SignName>
                      <SignRole>Ministro de Educación,<br />Ciencia y Tecnología</SignRole>
                    </Sign>
                    <Sign>
                      <SignName>Cra. Siomara Vitto</SignName>
                      <SignRole>Subsecretaria de<br />Silicon Misiones</SignRole>
                    </Sign>
                    <SigInk width="300" height="110" viewBox="540 512 300 110">
                      <g fill="none" stroke="#222" strokeWidth=".75">
                        <path d="M576 537C573 533 572 545 572.5 555C573 565 576 572 581 571C586 569 585 562 586 563C586 568 589 570 590 566C591 560 592 560 593 566C595 570 598 568 599 560C600 553 603 553 603 560C603 568 601 572 604 568C606 562 609 556 611 558C612 564 609 570 612 568C616 564 618 555 619 553" />
                        <path d="M593 527C598 540 597 560 594 588M596 528C596 540 597 570 596 590M592 588L623 573M623 542L622 573L623 603M587 536V537" />
                        <path d="M735 563C752 556 772 548 787 543C797 541 808 538 818 537M735 565C748 561 760 559 773 557M758 530L745 573M768 525L747 573M787 517L773 557M782 522L770 558M745 573L737 603M752 568L775 548M760 565L785 545M756 562L762 549" />
                      </g>
                    </SigInk>
                  </Signs>
                </Card>
              </Page>
            </Canvas>
            <Scroll><ScrollThumb /></Scroll>
            <Watermark>
              <WaterBig>Activar Windows</WaterBig>
              <WaterSmall>Ve a Configuración para activar Windows.</WaterSmall>
            </Watermark>
          </DocArea>
        </WorkRight>
      </Work>

      <Status>
        <Pager>
          <PagerFirst />
          <PagerGap $w={9} />
          <PagerPrev />
          <PageNum>1 DE 1</PageNum>
          <PagerPrev flip />
          <PagerGap $w={11} />
          <PagerFirst flip />
          <PagerGap $w={8} />
          <PagerRound color="#4d4d4d" />
          <PagerGap $w={8} />
          <PagerRound color="#9c9c9c" flip />
        </Pager>
        <ViewSet>
          <ViewBtn $on $w={23}><V1 /></ViewBtn>
          <ViewBtn $w={22}><V2 /></ViewBtn>
          <ViewBtn><V3 /></ViewBtn>
          <ViewBtn><V4 /></ViewBtn>
          <ViewBtn><V5 /></ViewBtn>
          <ViewBtn><V5 c={VG} split /></ViewBtn>
          <ZoomBit $w={24}>–</ZoomBit>
          <Slider><Thumb /><Tick /></Slider>
          <ZoomBit $w={12}>+</ZoomBit>
          <ZoomBit $w={55} $s={11}>50%</ZoomBit>
        </ViewSet>
      </Status>

      <Task>
        <Start><WinLogo /></Start>
        <SearchBox><SearchGlass />Escribe aquí para buscar.</SearchBox>
        <TaskView><TaskViewIcon /></TaskView>
        <Pin><VsCode /></Pin>
        <Pin><ChromeIcon /></Pin>
        <Pin><VlcIcon /></Pin>
        <Pin><XamppIcon /></Pin>
        <Pin><GearIcon /></Pin>
        <Pin><FolderIcon /></Pin>
        <Pin><WordIcon /></Pin>
        <Pin $on><NitroTask /></Pin>
        <Tray>
          <Chev />
          <TraySlot $w={32}><Battery /></TraySlot>
          <TraySlot $w={20}><Wifi /></TraySlot>
          <TraySlot $w={26}><Volume /></TraySlot>
          <TraySlot $w={33}>ESP</TraySlot>
          <Clock>22:28<br />17/10/2023</Clock>
          <Notify><Bubble /><NotifyNum>1</NotifyNum></Notify>
        </Tray>
      </Task>
    </Shell>
  );
}
